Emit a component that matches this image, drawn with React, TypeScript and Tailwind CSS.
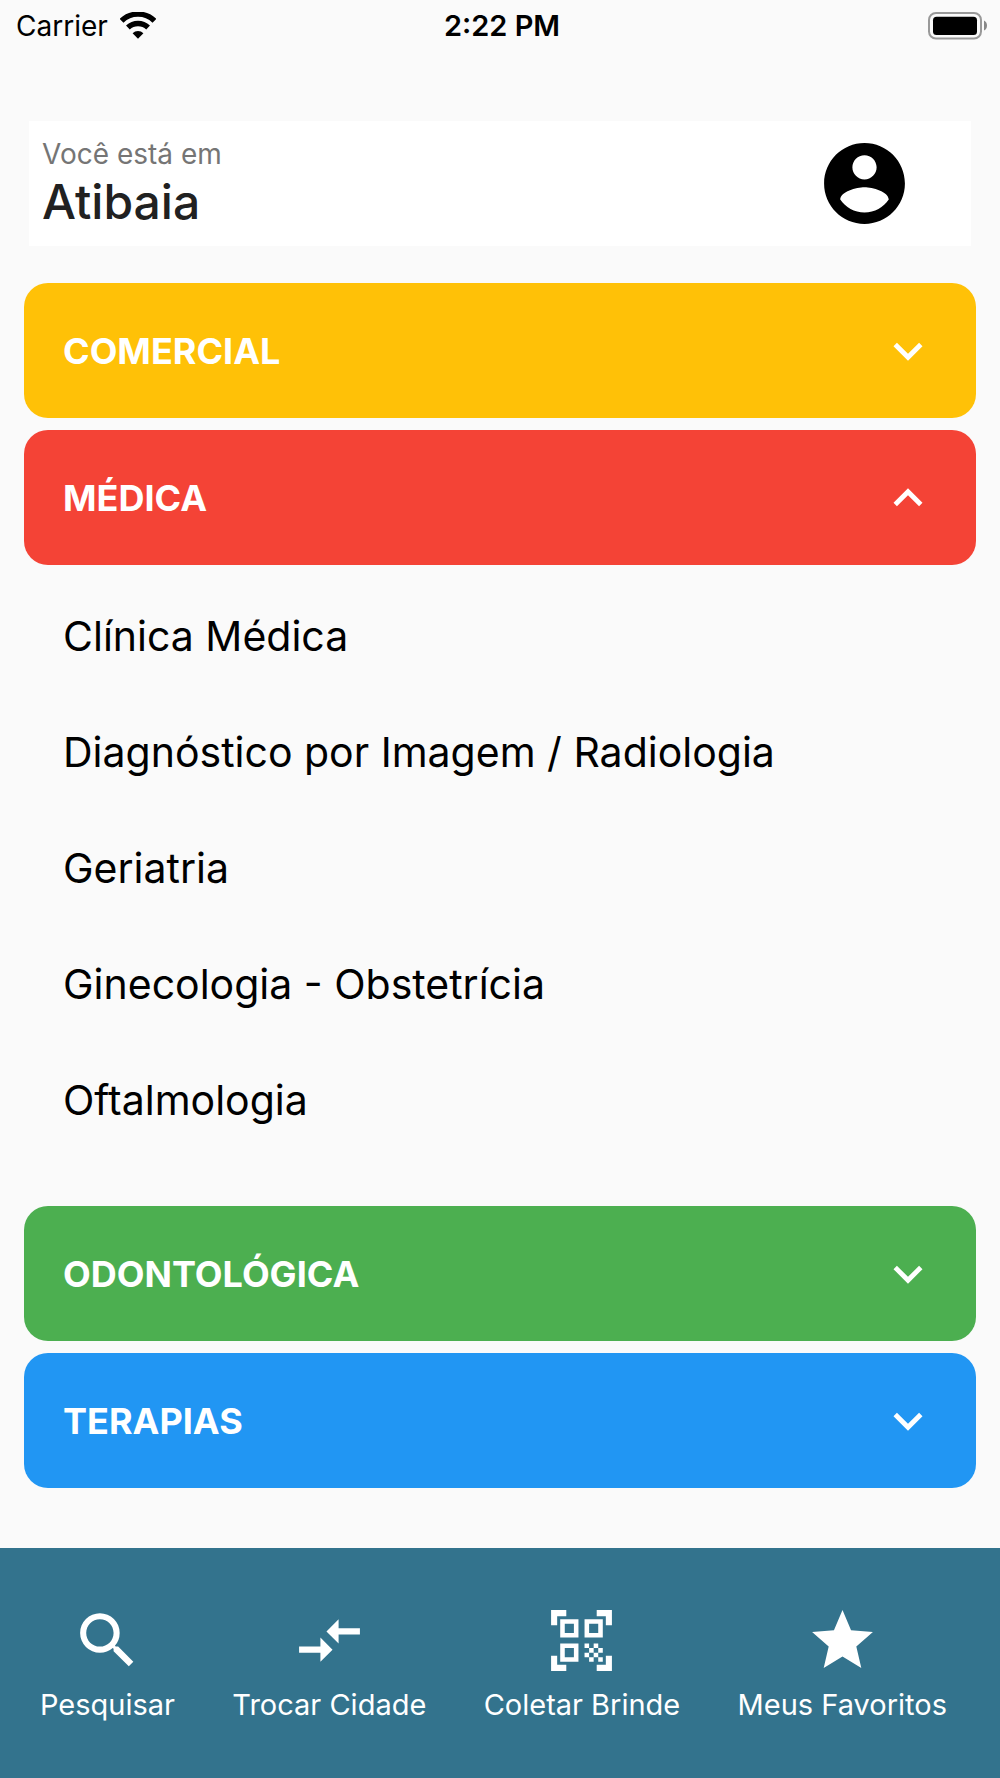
import { useState } from "react";
import {
  MdCompareArrows,
  MdExpandLess,
  MdExpandMore,
  MdQrCodeScanner,
  MdSearch,
  MdStar,
} from "react-icons/md";

const sections = [
  { title: "COMERCIAL", color: "bg-[#ffc107]", items: [] as string[] },
  {
    title: "MÉDICA",
    color: "bg-[#f44336]",
    items: [
      "Clínica Médica",
      "Diagnóstico por Imagem / Radiologia",
      "Geriatria",
      "Ginecologia - Obstetrícia",
      "Oftalmologia",
    ],
  },
  { title: "ODONTOLÓGICA", color: "bg-[#4caf50]", items: [] as string[] },
  { title: "TERAPIAS", color: "bg-[#2196f3]", items: [] as string[] },
];

const navItems = [
  { label: "Pesquisar", Icon: MdSearch },
  { label: "Trocar Cidade", Icon: MdCompareArrows },
  { label: "Coletar Brinde", Icon: MdQrCodeScanner },
  { label: "Meus Favoritos", Icon: MdStar },
];

function StatusBar() {
  return (
    <div className="flex h-[51px] items-center pl-4 pr-3 text-[28px] leading-none text-black">
      <div className="flex flex-1 items-center gap-3">
        <span>Carrier</span>
        <svg className="h-7 w-9" viewBox="0 1 36 28" fill="none" aria-label="Wi-Fi">
          <path d="M1.6 9.8A23.5 23.5 0 0 1 34.4 9.8" stroke="#000" strokeWidth="5.4" />
          <path d="M7.9 16.5A14.6 14.6 0 0 1 28.1 16.5" stroke="#000" strokeWidth="5.4" />
          <path d="M12.6 22.2A8 8 0 0 1 23.4 22.2L18 27.8Z" fill="#000" />
        </svg>
      </div>
      <span className="text-[29px] font-semibold">2:22 PM</span>
      <div className="flex flex-1 justify-end">
        <svg className="h-7 w-[60px]" viewBox="0 0 60 28" aria-label="Bateria">
          <rect x="1" y="1" width="52" height="25.5" rx="7" fill="none" stroke="#999" strokeWidth="2" />
          <rect x="5" y="4.7" width="44" height="18.3" rx="3.5" fill="#000" />
          <path d="M56 8.5q3 1.500 3 5t-3 5z" fill="#888" />
        </svg>
      </div>
    </div>
  );
}

function LocationHeader() {
  return (
    <header className="mx-[29px] mt-[70px] flex items-center justify-between bg-white pb-[15px] pl-[13px] pr-[58px] pt-[14px]">
      <div>
        <p className="text-[28px] leading-[38px] text-[#757575]">Você está em</p>
        <h1 className="text-[48px] font-medium leading-[58px] text-[#212121]">Atibaia</h1>
      </div>
      <button type="button" aria-label="Conta" className="-my-2">
        <svg className="size-[97px]" viewBox="0 0 24 24" fill="#000">
          <path d="M12 2C6.480 2 2 6.480 2 12s4.480 10 10 10 10-4.480 10-10S17.520 2 12 2zm0 3c1.660 0 3 1.340 3 3s-1.340 3-3 3-3-1.340-3-3 1.340-3 3-3zm0 14.200c-2.500 0-4.710-1.280-6-3.220.030-1.990 4-3.080 6-3.080 1.990 0 5.970 1.090 6 3.080-1.290 1.940-3.500 3.220-6 3.220z" />
        </svg>
      </button>
    </header>
  );
}

export default function App() {
  const [open, setOpen] = useState("MÉDICA");

  return (
    <div className="flex min-h-screen flex-col bg-[#fafafa] font-['Inter',sans-serif]">
      <StatusBar />
      <LocationHeader />
      <main className="mx-6 mb-14 mt-[37px] flex flex-col gap-3">
        {sections.map(({ title, color, items }) => {
          const expanded = open === title;
          const Chevron = expanded ? MdExpandLess : MdExpandMore;
          return (
            <section key={title}>
              <button
                type="button"
                aria-expanded={expanded}
                onClick={() => setOpen(expanded ? "" : title)}
                className={`flex h-[135px] w-full items-center justify-between rounded-3xl pl-[39px] pr-[39px] text-white ${color}`}
              >
                <span className="text-[36px] font-bold">{title}</span>
                <Chevron className="size-[58px]" />
              </button>
              {expanded && items.length > 0 && (
                <ul className="mb-[35px] mt-[14px]">
                  {items.map((item) => (
                    <li key={item}>
                      <a href="#" className="flex h-[116px] items-center px-[39px] text-[41px] text-black">
                        {item}
                      </a>
                    </li>
                  ))}
                </ul>
              )}
            </section>
          );
        })}
      </main>
      <nav className="mt-auto flex h-[230px] items-center justify-between bg-[#33738d] pl-[40px] pr-[53px] pt-[2px] text-white">
        {navItems.map(({ label, Icon }) => (
          <button key={label} type="button" className="flex flex-col items-center gap-2">
            <Icon className="size-[73px]" />
            <span className="text-[29px] leading-[40px]">{label}</span>
          </button>
        ))}
      </nav>
    </div>
  );
}
